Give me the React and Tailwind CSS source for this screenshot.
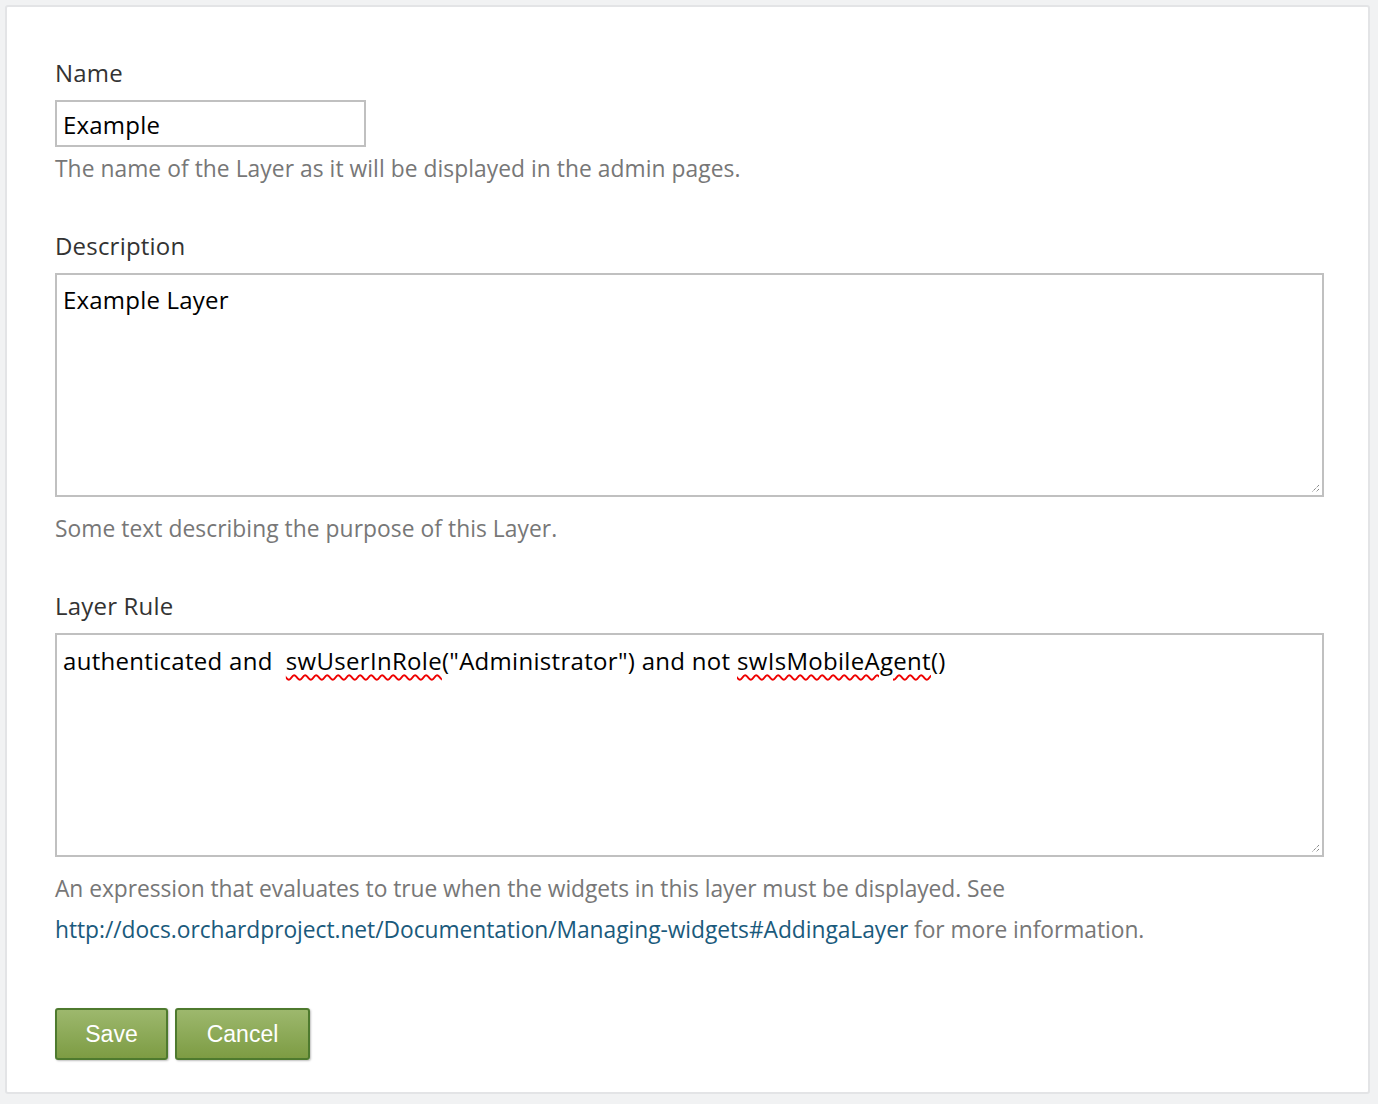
export default function App() {
  const grip = (
    <svg className="absolute bottom-[2px] right-[2px]" width="10" height="10" viewBox="0 0 10 10">
      <path d="M9 2 L2 9 M9 6 L6 9" stroke="#555" strokeWidth="1" strokeDasharray="1 1" />
    </svg>
  );

  return (
    <div className="min-h-screen bg-[#f1f2f3] p-[5px] font-['Open_Sans',sans-serif]">
      <div className="h-[1089px] w-[1365px] rounded-[3px] border-2 border-[#e3e4e6] bg-white px-[48px] pt-[50px]">
        {/* Name */}
        <label className="block text-[24px] leading-[32px] tracking-[0.2px] text-[#333]">Name</label>
        <input
          defaultValue="Example"
          className="mt-[11px] block h-[47px] w-[311px] border-2 border-[#c0c0c0] px-[6px] pt-[2px] text-[24px] tracking-[0.2px] text-black outline-none"
        />
        <p className="mt-[1px] text-[22.8px] leading-[41px] tracking-[0.05px] text-[#777]">
          The name of the Layer as it will be displayed in the admin pages.
        </p>

        {/* Description */}
        <label className="mt-[41px] block text-[24px] leading-[32px] tracking-[0.2px] text-[#333]">Description</label>
        <div className="relative mt-[11px] h-[224px] w-[1269px] border-2 border-[#c0c0c0] px-[6px] pt-[9px] text-[24px] leading-[32px] tracking-[0.2px] text-black">
          Example Layer
          {grip}
        </div>
        <p className="mt-[11px] text-[22.8px] leading-[41px] tracking-[0.05px] text-[#777]">
          Some text describing the purpose of this Layer.
        </p>

        {/* Layer Rule */}
        <label className="mt-[41px] block text-[24px] leading-[32px] tracking-[0.2px] text-[#333]">Layer Rule</label>
        <div className="relative mt-[11px] h-[224px] w-[1269px] border-2 border-[#c0c0c0] px-[6px] pt-[10px] text-[24px] leading-[32px] tracking-[0.3px] text-black">
          authenticated and{"\u00a0 "}
          <span className="underline decoration-wavy decoration-[#e00] decoration-[1.5px] underline-offset-[4px]">swUserInRole</span>
          ("Administrator") and not{" "}
          <span className="underline decoration-wavy decoration-[#e00] decoration-[1.5px] underline-offset-[4px]">swIsMobileAgent</span>()
          {grip}
        </div>
        <p className="mt-[11px] text-[22.8px] leading-[41px] tracking-[-0.05px] text-[#777]">
          An expression that evaluates to true when the widgets in this layer must be displayed. See
          <br />
          <a href="#" className="text-[#1a5a7c]">
            http://docs.orchardproject.net/Documentation/Managing-widgets#AddingaLayer
          </a>{" "}
          for more information.
        </p>

        {/* Buttons */}
        <div className="mt-[58px] flex gap-[7px]">
          <button className="h-[52px] w-[113px] rounded-[3px] border-2 border-[#4e7a2e] bg-gradient-to-b from-[#9db86d] to-[#7d9c43] font-['Liberation_Sans',sans-serif] text-[23px] text-white shadow-[1px_1px_2px_rgba(0,0,0,0.25)]">
            Save
          </button>
          <button className="h-[52px] w-[135px] rounded-[3px] border-2 border-[#4e7a2e] bg-gradient-to-b from-[#9db86d] to-[#7d9c43] font-['Liberation_Sans',sans-serif] text-[23px] text-white shadow-[1px_1px_2px_rgba(0,0,0,0.25)]">
            Cancel
          </button>
        </div>
      </div>
    </div>
  );
}
